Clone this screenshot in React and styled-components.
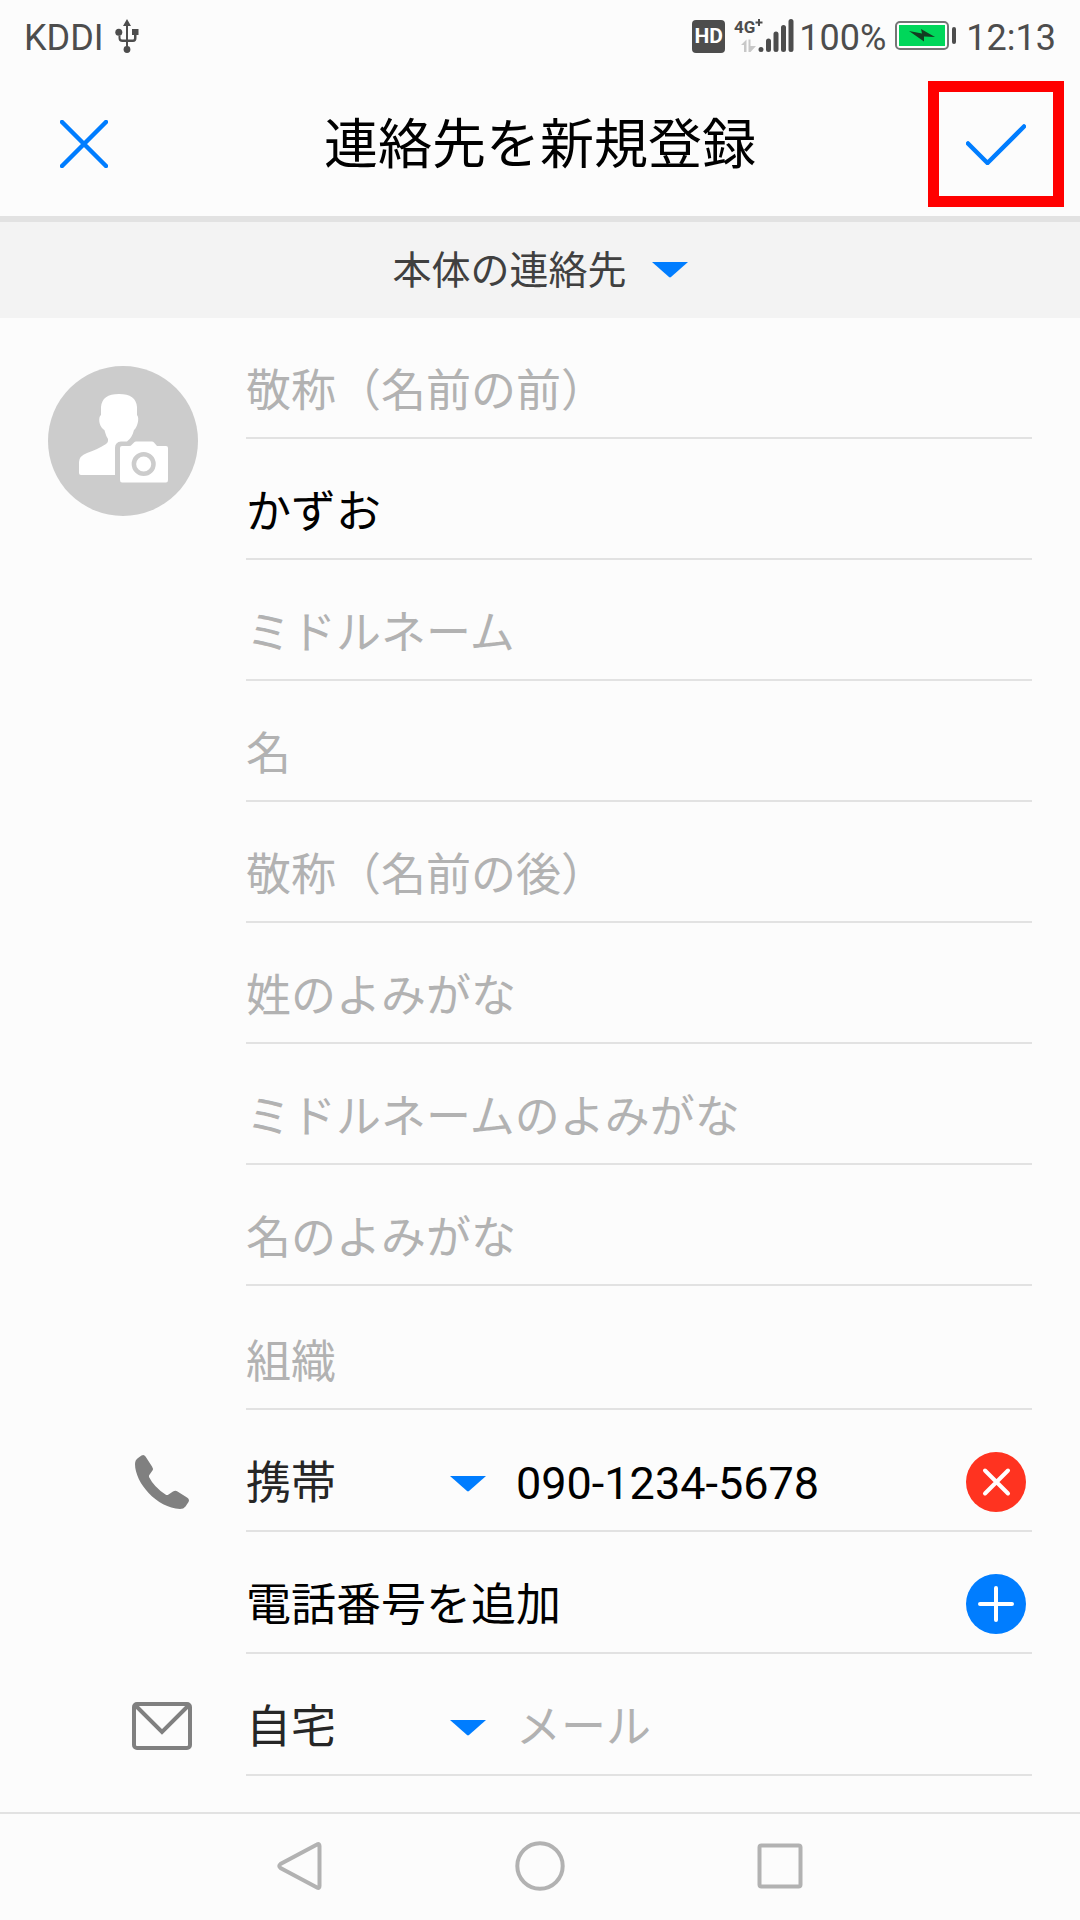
import React, { useState } from 'react'
import styled, { createGlobalStyle } from 'styled-components'

const nameFields = [
  { name: 'prefix', label: '敬称（名前の前）' },
  { name: 'lastName', label: '姓', value: 'かずお' },
  { name: 'middleName', label: 'ミドルネーム' },
  { name: 'firstName', label: '名' },
  { name: 'suffix', label: '敬称（名前の後）' },
  { name: 'lastNameKana', label: '姓のよみがな' },
  { name: 'middleNameKana', label: 'ミドルネームのよみがな' },
  { name: 'firstNameKana', label: '名のよみがな' },
]

export default function App() {
  const [phone, setPhone] = useState('090-1234-5678')

  return (
    <>
      <GlobalStyle />
      <Screen>
        <StatusBar />
        <Form onSubmit={handleSubmit}>
          <Header>
            <CloseButton type="button" aria-label="閉じる">
              <CloseIcon />
            </CloseButton>
            <Title>連絡先を新規登録</Title>
            <SaveButton type="submit" aria-label="保存">
              <CheckIcon />
            </SaveButton>
          </Header>
          <AccountBar>
            <Dropdown name="account" label="保存先" option="本体の連絡先" account />
          </AccountBar>

          <Section>
            <PhotoButton type="button" aria-label="写真を追加">
              <PhotoIcon />
            </PhotoButton>
            <div>
              {nameFields.map(({ name, label, value }) => (
                <Row key={name}>
                  <Input
                    name={name}
                    aria-label={label}
                    placeholder={label}
                    defaultValue={value}
                  />
                </Row>
              ))}
            </div>
          </Section>

          <Section $spaced>
            <span />
            <Row>
              <Input name="organization" aria-label="組織" placeholder="組織" />
            </Row>
          </Section>

          <Section>
            <RowIcon>
              <PhoneIcon />
            </RowIcon>
            <div>
              <Row $tall>
                <Dropdown name="phoneType" label="電話の種類" option="携帯" />
                <Input
                  type="tel"
                  name="phone"
                  aria-label="電話番号"
                  value={phone}
                  onChange={event => setPhone(event.target.value)}
                />
                <RoundButton
                  type="button"
                  $color="#ff3320"
                  aria-label="電話番号を削除"
                  onClick={() => setPhone('')}
                >
                  <RemoveIcon />
                </RoundButton>
              </Row>
              <Row $tall>
                <RowLabel id="add-phone">電話番号を追加</RowLabel>
                <RoundButton
                  type="button"
                  $color="#007dff"
                  aria-labelledby="add-phone"
                >
                  <AddIcon />
                </RoundButton>
              </Row>
            </div>
          </Section>

          <Section>
            <RowIcon>
              <MailIcon />
            </RowIcon>
            <Row $tall>
              <Dropdown name="mailType" label="メールの種類" option="自宅" />
              <Input
                type="email"
                name="mail"
                aria-label="メール"
                placeholder="メール"
              />
            </Row>
          </Section>
        </Form>

        <NavigationBar>
          <NavButton type="button" aria-label="戻る">
            <svg width="50" height="50" viewBox="0 0 50 50">
              <path d="M42 3.5Q44.500 2 44.500 5V45Q44.500 48 42 46.500L5.500 27Q3 25 5.500 23Z" />
            </svg>
          </NavButton>
          <NavButton type="button" aria-label="ホーム">
            <svg width="50" height="50" viewBox="0 0 50 50">
              <circle cx="25" cy="25" r="22.700" />
            </svg>
          </NavButton>
          <NavButton type="button" aria-label="履歴">
            <svg width="50" height="50" viewBox="0 0 50 50">
              <rect x="4.500" y="4.500" width="41" height="41" rx="2" />
            </svg>
          </NavButton>
        </NavigationBar>
      </Screen>
    </>
  )

  function handleSubmit(event) {
    event.preventDefault()
  }
}

function StatusBar() {
  return (
    <StatusBarStyled>
      <StatusGroup $gap={11}>
        <StatusText>KDDI</StatusText>
        <UsbIcon />
      </StatusGroup>
      <StatusGroup $gap={5}>
        <StatusGroup $gap={9}>
          <HdBadge>HD</HdBadge>
          <SignalIcon />
        </StatusGroup>
        <StatusGroup $gap={9}>
          <StatusText>100%</StatusText>
          <BatteryIcon />
          <StatusText>12:13</StatusText>
        </StatusGroup>
      </StatusGroup>
    </StatusBarStyled>
  )
}

function Dropdown({ name, label, option, account }) {
  return (
    <DropdownStyled $account={account}>
      <select name={name} aria-label={label}>
        <option>{option}</option>
      </select>
      <svg width="36" height="16" viewBox="0 0 36 16" fill="#007dff">
        <path d="M0 0H36L19 15Q18 15.800 17 15Z" />
      </svg>
    </DropdownStyled>
  )
}

function UsbIcon() {
  return (
    <svg width="24" height="34" viewBox="0 0 24 34" fill="#4d4d4d">
      <path d="M12 0L16 7H13V20.500H18Q19 20.500 19 19V16H17V10H23.500V16H21.500V19Q21.500 23 18 23H13V28H11V23H7.500Q3.500 23 3.500 19V16.500H5.500V19Q5.500 20.500 7.500 20.500H11V7H8Z" />
      <circle cx="3.800" cy="13.300" r="3.500" />
      <circle cx="12" cy="30.500" r="3.400" />
    </svg>
  )
}

function SignalIcon() {
  return (
    <SignalStyled width="60" height="34" viewBox="0 0 60 34">
      <text x="0" y="14">
        4G
      </text>
      <path d="M25 0V7M21.500 3.500H28.500" stroke="#4d4d4d" strokeWidth="2" />
      <path
        d="M7 26L12.500 20.500V33H10V26ZM14.500 20.500H16.500V27H22L16.500 33H14.500Z"
        fill="#c8c8c8"
      />
      <path
        d="M27 30.500V30.600M34.500 22V30.500M42 15V30.500M49.500 8.500V30.500M57 2.500V30.500"
        stroke="#4d4d4d"
        strokeWidth="5"
        strokeLinecap="round"
      />
    </SignalStyled>
  )
}

function BatteryIcon() {
  return (
    <svg width="62" height="30" viewBox="0 0 62 30">
      <rect
        x="1"
        y="1"
        width="52"
        height="27"
        rx="4"
        fill="#fff"
        stroke="#757575"
        strokeWidth="2"
      />
      <rect x="4" y="4" width="46" height="21" fill="#00d75a" />
      <path
        d="M14 10L27 12.500L26 8L40 16L29 15.500V20.500Z"
        fill="#123d21"
      />
      <rect x="57" y="6" width="4" height="17" rx="2" fill="#4d4d4d" />
    </svg>
  )
}

function CloseIcon() {
  return (
    <svg width="48" height="48" viewBox="0 0 48 48">
      <path
        d="M2 2L46 46M46 2L2 46"
        stroke="#007dff"
        strokeWidth="4.500"
        strokeLinecap="round"
      />
    </svg>
  )
}

function CheckIcon() {
  return (
    <svg width="60" height="42" viewBox="0 0 60 42" fill="none">
      <path
        d="M2 20.500L21.500 40L58 3.500"
        stroke="#007dff"
        strokeWidth="4.500"
        strokeLinecap="round"
        strokeLinejoin="round"
      />
    </svg>
  )
}

function PhotoIcon() {
  return (
    <svg width="150" height="150" viewBox="0 0 150 150">
      <circle cx="75" cy="75" r="75" fill="#ccc" />
      <path
        d="M71 28Q54 28 53 41V49C50 51 51 60 55 63Q57 64 57 66Q58 70 60 73V75Q60 76.500 58 78C52 82 45 85 39 87Q31 90 31 96V107Q31 109 33 109H67V82Q67 76 73 75.500H79Q84 72 86 64C89 62 92 52 89 49V41Q88 28 71 28Z"
        fill="#fff"
      />
      <path
        d="M74 80H81Q83 80 84 78.500L86 76.500Q87 75.500 88 75.500H104Q105 75.500 106 76.500L109 80H118Q120 80 120 82V114Q120 116.500 118 116.500H74Q72 116.500 72 114V82Q72 80 74 80Z"
        fill="#fff"
      />
      <circle
        cx="95.700"
        cy="98"
        r="9.800"
        fill="none"
        stroke="#ccc"
        strokeWidth="4.500"
      />
    </svg>
  )
}

function PhoneIcon() {
  return (
    <svg width="60" height="60" viewBox="-3 -3 60 60" fill="#808080">
      <path d="M0 9Q0 5 3 3L6.500 .5Q9 -1 10.500 1.500L17 11.500Q18.500 13.500 17.500 15.500L15 19Q13.500 20.500 14 22Q19 32 30.500 39.500Q32 40.500 33.500 39.500L38 36.500Q40.500 35 42.500 36.500L52 42.500Q55 44.500 53.500 47L50.500 51.500Q48.500 54 45 54C22 53 0 28 0 9Z" />
    </svg>
  )
}

function MailIcon() {
  return (
    <svg
      width="60"
      height="48"
      viewBox="0 0 60 48"
      fill="none"
      stroke="#808080"
      strokeWidth="4"
    >
      <rect x="2" y="2" width="56" height="44" rx="3" />
      <path d="M4 4L30 30L56 4" />
    </svg>
  )
}

function RemoveIcon() {
  return (
    <svg width="60" height="60" viewBox="0 0 60 60">
      <path
        d="M19 18.500L42 41.500M42 18.500L19 41.500"
        stroke="#fff"
        strokeWidth="4"
        strokeLinecap="round"
      />
    </svg>
  )
}

function AddIcon() {
  return (
    <svg width="60" height="60" viewBox="0 0 60 60">
      <path
        d="M30 14V46M14 30H46"
        stroke="#fff"
        strokeWidth="4"
        strokeLinecap="round"
      />
    </svg>
  )
}

const GlobalStyle = createGlobalStyle`
  * {
    box-sizing: border-box;
  }

  body {
    margin: 0;
    background: #fcfcfc;
    color: #000;
    font-family: Roboto, 'Noto Sans CJK JP', sans-serif;
    font-size: 45px;
  }

  button,
  input,
  select {
    margin: 0;
    padding: 0;
    border: none;
    border-radius: 0;
    background: none;
    font: inherit;
  }

  svg {
    display: block;
    flex-shrink: 0;
  }
`

const Screen = styled.div`
  display: flex;
  flex-direction: column;
  min-height: 100vh;
`

const StatusBarStyled = styled.div`
  display: flex;
  align-items: center;
  justify-content: space-between;
  height: 72px;
  padding: 0 24px;
  color: #4d4d4d;
  font-size: 36px;
`

const StatusGroup = styled.div`
  display: flex;
  align-items: center;
  gap: ${({ $gap }) => $gap}px;
`

const StatusText = styled.span`
  padding-top: 4px;
  line-height: 48px;
`

const HdBadge = styled.span`
  width: 33px;
  height: 33px;
  border-radius: 4px;
  background: #4d4d4d;
  color: #fff;
  font-size: 21px;
  font-weight: 700;
  line-height: 33px;
  text-align: center;
`

const SignalStyled = styled.svg`
  overflow: visible;

  text {
    fill: #4d4d4d;
    font-family: 'Liberation Sans Narrow', Roboto, sans-serif;
    font-size: 17px;
    font-weight: 700;
  }
`

const Form = styled.form`
  flex: 1;
`

const Header = styled.header`
  display: grid;
  grid-template-columns: 1fr auto 1fr;
  align-items: center;
  height: 150px;
  padding: 0 16px 0 60px;
  border-bottom: 6px solid #e2e2e2;
`

const Title = styled.h1`
  margin: 0;
  padding: 4px 44px 0 0;
  font-size: 54px;
  font-weight: 400;
  line-height: 80px;
`

const CloseButton = styled.button`
  justify-self: start;
`

const SaveButton = styled.button`
  display: grid;
  justify-self: end;
  place-content: center;
  width: 136px;
  height: 126px;
  border: 11px solid #f00;
`

const AccountBar = styled.div`
  display: flex;
  align-items: center;
  justify-content: center;
  height: 96px;
  background: #f3f3f3;
`

const DropdownStyled = styled.span`
  display: grid;
  flex-shrink: 0;
  align-items: center;
  width: ${({ $account }) => ($account ? 'auto' : '240px')};
  color: ${({ $account }) => ($account ? '#404040' : '#262626')};
  font-size: ${({ $account }) => ($account ? '39px' : '45px')};

  select,
  svg {
    grid-area: 1 / 1;
  }

  select {
    appearance: none;
    padding: ${({ $account }) => ($account ? '2px' : '0')} 60px 0 0;
    color: inherit;
    line-height: 66px;
  }

  svg {
    justify-self: end;
    pointer-events: none;
  }
`

const Section = styled.section`
  display: grid;
  grid-template-columns: 246px minmax(0, 1fr);
  align-items: start;
  margin-top: ${({ $spaced }) => ($spaced ? '3px' : '0')};
  padding-right: 48px;
`

const PhotoButton = styled.button`
  justify-self: end;
  margin: 48px 48px 0 0;
`

const RowIcon = styled.span`
  display: flex;
  align-items: center;
  justify-content: flex-end;
  height: 120px;
  padding: 24px 54px 0 0;
`

const Row = styled.div`
  display: flex;
  align-items: center;
  gap: 30px;
  height: ${({ $tall }) => ($tall ? '122px' : '121px')};
  padding-top: 28px;
  border-bottom: 2px solid #e2e2e2;
`

const RowLabel = styled.span`
  flex: 1;
  line-height: 66px;
`

const Input = styled.input`
  flex: 1;
  min-width: 0;
  height: 66px;
  color: #000;
  line-height: 66px;
  outline: none;

  &::placeholder {
    color: #b2b2b2;
    line-height: 66px;
    opacity: 1;
  }
`

const RoundButton = styled.button`
  flex-shrink: 0;
  width: 60px;
  height: 60px;
  margin: 0 6px 4px 0;
  border-radius: 50%;
  background: ${({ $color }) => $color};
`

const NavigationBar = styled.nav`
  display: flex;
  align-items: center;
  justify-content: center;
  height: 108px;
  padding-bottom: 2px;
  border-top: 2px solid #e2e2e2;
`

const NavButton = styled.button`
  display: flex;
  justify-content: center;
  width: 240px;

  svg {
    fill: none;
    stroke: #b2b2b2;
    stroke-width: 4;
  }
`
